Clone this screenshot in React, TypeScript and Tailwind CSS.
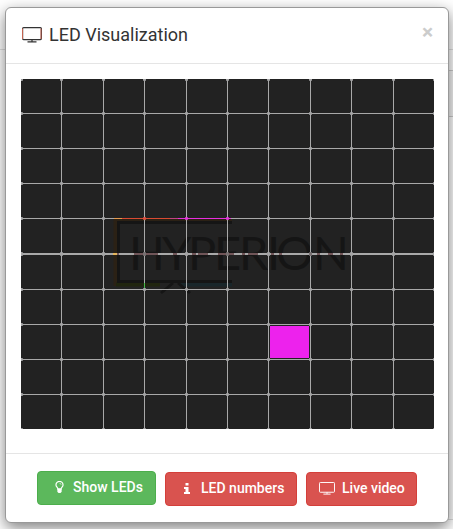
import React from 'react';

const columns = [61, 103, 144, 186, 227, 268, 310, 351, 393];
const rows = [113, 148, 183, 218, 253, 289, 324, 359, 394];

function Monitor({ className, accent = false }: { className: string; accent?: boolean }) {
  return (
    <svg className={className} viewBox="0 0 20 16" fill="none" preserveAspectRatio="none">
      <rect x="0.6" y="0.6" width="18.8" height="12" rx="1" stroke="currentColor" strokeWidth="1.2" />
      {accent && <path d="M.5 1.5V12M19 1.5V12" stroke="#c46350" strokeWidth="1" />}
      <path d="M10 12.6V14.6M5.5 14.9H14.5" stroke="currentColor" strokeWidth="1.2" />
    </svg>
  );
}

function nodeColor(x: number, y: number) {
  if (y === 218 && x === 144) return '#dc5141';
  if (y === 218 && (x === 186 || x === 227)) return '#e13bd8';
  if (y === 253 && (x === 144 || x === 227 || x === 310)) return '#777071';
  return '#a4a4a5';
}

function LedPreview() {
  const edgeRows = [79, ...rows, 429];
  const edgeColumns = [21, ...columns, 434];
  return (
    <svg className="block h-[350px] w-[413px] rounded-[1px] bg-[#222]" viewBox="21 79 413 350" shapeRendering="crispEdges">
      <g fill="none" shapeRendering="auto">
        <path d="M115.5 286V220H232" stroke="#2b2115" strokeWidth="4" />
        <path d="M116 284.5H160" stroke="#20250f" strokeWidth="4" />
        <path d="M179 284.5H232" stroke="#19262a" strokeWidth="4" />
      </g>
      <g shapeRendering="auto">
        <path d="M232 222.5H118.5V281.5H232M173 283L161 293M178 283L190 293" stroke="#151515" strokeWidth="2.8" fill="none" />
        <text x="129 162 188 214 239 267 276 313" y="270" className="font-[Lato,sans-serif] text-[47px]" fill="#151515">HYPERION</text>
      </g>
      {columns.map((x) => <rect key={x} x={x} y="79" width="1" height="350" fill="#a9a9a9" />)}
      {rows.map((y) => <rect key={y} x="21" y={y} width="413" height={y === 253 ? 2 : 1} fill="#a9a9a9" />)}
      <rect x="114" y="218" width="8" height="1" fill="#e69a4d" />
      <rect x="122" y="218" width="48" height="1" fill="#d94a32" />
      <rect x="170" y="218" width="8" height="1" fill="#c34480" />
      <rect x="178" y="218" width="53" height="1" fill="#e72edf" />
      <rect x="113" y="253" width="4" height="2" fill="#e5b65c" />
      <rect x="144" y="283" width="1" height="6" fill="#43b94b" />
      {[[117, 2], [134, 24], [173, 4], [192, 4], [198, 10], [218, 16], [242, 3], [248, 10], [271, 3], [279, 3], [309, 3], [317, 3], [328, 5], [340, 3]].map(([x, width]) => (
        <rect key={x} x={x} y="253" width={width} height="2" fill="#705558" />
      ))}
      {edgeRows.map((y) => edgeColumns.map((x) => (
        <React.Fragment key={`${x}-${y}`}>
          <rect x={x - 1} y={y} width="3" height={y === 253 ? 2 : 1} fill={nodeColor(x, y)} />
          <rect x={x} y={y - 1} width="1" height={y === 253 ? 4 : 3} fill={nodeColor(x, y)} />
          <rect x={x - 1} y={y - 1} width="3" height={y === 253 ? 4 : 3} fill={nodeColor(x, y)} opacity=".75" />
        </React.Fragment>
      )))}
      <rect x="270" y="326" width="39" height="32" fill="#ed22ed" />
    </svg>
  );
}

const button = 'flex h-[34px] shrink-0 items-center rounded-[4px] border text-[14px] font-medium text-white';

export default function App() {
  return (
    <div className="relative h-[529px] w-[453px] overflow-hidden bg-white font-[Roboto,sans-serif]">
      <div className="absolute inset-x-0 top-[49px] h-px bg-[#e0e0e0]" />
      <div className="absolute right-0 top-[70px] h-[47px] w-[8px] border-y border-[#ccc] bg-[#f5f5f5]" />
      <div className="absolute right-0 top-[519px] h-px w-2 bg-[#ddd]" />
      <div className="relative ml-[5px] h-[529px] w-[444px] pt-[7px]">
        <section className="flex h-[516px] w-[444px] flex-col rounded-[6px] border border-[#999] bg-white shadow-[0_5px_15px_rgba(0,0,0,0.5)]">
          <header className="flex h-[56px] shrink-0 items-center border-b border-[#e5e5e5] pl-4 pr-[14px]">
            <Monitor accent className="mt-[-1px] h-4 w-5 text-[#333]" />
            <h1 className="ml-[7px] mt-[-2px] text-[18px] font-normal leading-5 text-[#333]">LED Visualization</h1>
            <button aria-label="Close" className="ml-auto mt-[-7px] w-[13px] text-center text-[21px] font-bold leading-5 text-[#ccc]">×</button>
          </header>
          <main className="flex h-[389px] shrink-0 pl-[15px] pt-[15px]"><LedPreview /></main>
          <footer className="flex shrink-0 items-start gap-[9px] border-t border-[#e5e5e5] pl-[31px] pt-[17px]">
            <button className={`${button} w-[119px] border-[#4cae4c] bg-[#5cb85c] pl-[17px]`}>
              <svg className="mt-[-2px] h-[13px] w-[9px]" viewBox="0 0 9 14" fill="none">
                <path d="M2.8 8.8C2.8 6.9 .7 6.4 .7 4.2A3.8 3.8 0 0 1 8.3 4.2C8.3 6.4 6.2 6.9 6.2 8.8Z" stroke="white" strokeWidth="1.3" />
                <path d="M2.2 8H6.8V11.7L5.6 13H3.4L2.2 11.7Z" fill="white" />
                <path d="M4.5 2.5Q6.2 2.5 6.2 4" stroke="white" strokeWidth=".7" />
              </svg>
              <span className="ml-[9px] mt-[-2px] whitespace-nowrap">Show LEDs</span>
            </button>
            <button className={`${button} mt-px w-[132px] border-[#d43f3a] bg-[#d9534f] pl-[18px]`}>
              <svg className="mt-[-2px] h-[11px] w-[6px]" viewBox="0 0 6 11" fill="white"><path d="M1.5 0H4.5V2.5H1.5ZM0 4H4.5V9H6V11H0V9H1.5V6H0Z" /></svg>
              <span className="ml-[11px] mt-[-1px] whitespace-nowrap">LED numbers</span>
            </button>
            <button className={`${button} mt-px w-[111px] border-[#d43f3a] bg-[#d9534f] pl-3`}>
              <Monitor className="mt-[-2px] h-[13px] w-4 text-white" />
              <span className="ml-[7px] mt-[-1px] whitespace-nowrap">Live video</span>
            </button>
          </footer>
        </section>
      </div>
    </div>
  );
}
